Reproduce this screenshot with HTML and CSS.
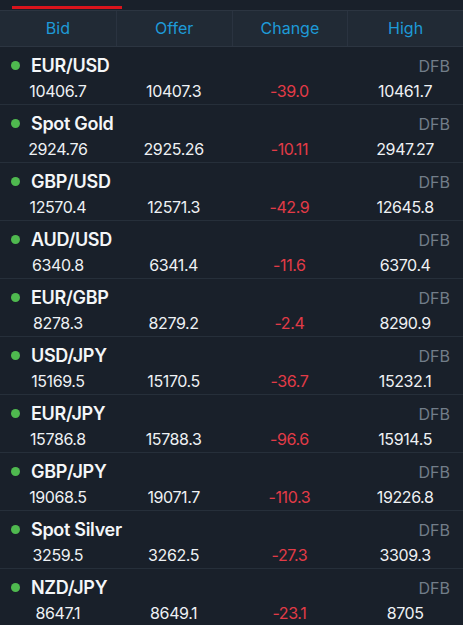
FILE: index.html
```html
<!DOCTYPE html>
<html lang="en">
<head>
    <meta charset="UTF-8">
    <meta name="viewport" content="width=device-width, initial-scale=1.0">
    <title>Quotes</title>
    <link rel="stylesheet" href="styles.css">
</head>
<body>
    <div class="quotes">
        <div class="tab-strip"><span class="tab-active"></span></div>
        <div class="quote-head">
            <span>Bid</span>
            <span>Offer</span>
            <span>Change</span>
            <span>High</span>
        </div>
        <ul class="quote-list">
            <li class="quote">
                <div class="quote-title"><i class="dot"></i><b>EUR/USD</b><em>DFB</em></div>
                <div class="quote-prices"><span>10406.7</span><span>10407.3</span><span class="down">-39.0</span><span>10461.7</span></div>
            </li>
            <li class="quote">
                <div class="quote-title"><i class="dot"></i><b>Spot Gold</b><em>DFB</em></div>
                <div class="quote-prices"><span>2924.76</span><span>2925.26</span><span class="down">-10.11</span><span>2947.27</span></div>
            </li>
            <li class="quote">
                <div class="quote-title"><i class="dot"></i><b>GBP/USD</b><em>DFB</em></div>
                <div class="quote-prices"><span>12570.4</span><span>12571.3</span><span class="down">-42.9</span><span>12645.8</span></div>
            </li>
            <li class="quote">
                <div class="quote-title"><i class="dot"></i><b>AUD/USD</b><em>DFB</em></div>
                <div class="quote-prices"><span>6340.8</span><span>6341.4</span><span class="down">-11.6</span><span>6370.4</span></div>
            </li>
            <li class="quote">
                <div class="quote-title"><i class="dot"></i><b>EUR/GBP</b><em>DFB</em></div>
                <div class="quote-prices"><span>8278.3</span><span>8279.2</span><span class="down">-2.4</span><span>8290.9</span></div>
            </li>
            <li class="quote">
                <div class="quote-title"><i class="dot"></i><b>USD/JPY</b><em>DFB</em></div>
                <div class="quote-prices"><span>15169.5</span><span>15170.5</span><span class="down">-36.7</span><span>15232.1</span></div>
            </li>
            <li class="quote">
                <div class="quote-title"><i class="dot"></i><b>EUR/JPY</b><em>DFB</em></div>
                <div class="quote-prices"><span>15786.8</span><span>15788.3</span><span class="down">-96.6</span><span>15914.5</span></div>
            </li>
            <li class="quote">
                <div class="quote-title"><i class="dot"></i><b>GBP/JPY</b><em>DFB</em></div>
                <div class="quote-prices"><span>19068.5</span><span>19071.7</span><span class="down">-110.3</span><span>19226.8</span></div>
            </li>
            <li class="quote">
                <div class="quote-title"><i class="dot"></i><b>Spot Silver</b><em>DFB</em></div>
                <div class="quote-prices"><span>3259.5</span><span>3262.5</span><span class="down">-27.3</span><span>3309.3</span></div>
            </li>
            <li class="quote">
                <div class="quote-title"><i class="dot"></i><b>NZD/JPY</b><em>DFB</em></div>
                <div class="quote-prices"><span>8647.1</span><span>8649.1</span><span class="down">-23.1</span><span>8705</span></div>
            </li>
        </ul>
    </div>
</body>
</html>
```

FILE: styles.css
```css
body {
    margin: 0;
    padding: 0;
    overflow: hidden;
    background: #19202a;
    font-family: Inter, "Liberation Sans", sans-serif;
}
.quotes {
    width: 463px;
}
.tab-strip {
    height: 11px;
    padding-top: 6px;
    box-sizing: border-box;
    border-bottom: 1px solid #2c3541;
}
.tab-active {
    display: block;
    width: 110px;
    height: 3px;
    margin-left: 12px;
    background: #d9141c;
}
.quote-head {
    display: grid;
    grid-template-columns: repeat(4, 1fr);
    height: 35px;
    background: #212a35;
    border-bottom: 1px solid #2c3541;
}
.quote-head span {
    line-height: 35px;
    text-align: center;
    font-size: 16px;
    color: #1e9ad8;
    border-left: 1px solid #2a3340;
}
.quote-head span:first-child {
    border-left: none;
}
.quote-list {
    margin: 0;
    padding: 0;
    list-style: none;
}
.quote {
    height: 57px;
    border-bottom: 1px solid #262f3a;
}
.quote-title {
    display: flex;
    align-items: center;
    height: 36px;
    padding: 1px 13px 0 11px;
    box-sizing: border-box;
}
.dot {
    width: 9px;
    height: 9px;
    border-radius: 50%;
    background: #4fb94f;
    margin-right: 11px;
}
.quote-title b {
    flex: 1;
    font-size: 18px;
    font-weight: 600;
    letter-spacing: -0.3px;
    color: #f4f6f8;
}
.quote-title em {
    font-style: normal;
    font-size: 16px;
    color: #727d89;
}
.quote-prices {
    display: grid;
    grid-template-columns: repeat(4, 1fr);
    margin-top: -2px;
}
.quote-prices span {
    text-align: center;
    font-size: 16px;
    letter-spacing: -0.4px;
    line-height: 20px;
    color: #eef1f4;
}
.quote-prices .down {
    color: #e23b47;
}
```
